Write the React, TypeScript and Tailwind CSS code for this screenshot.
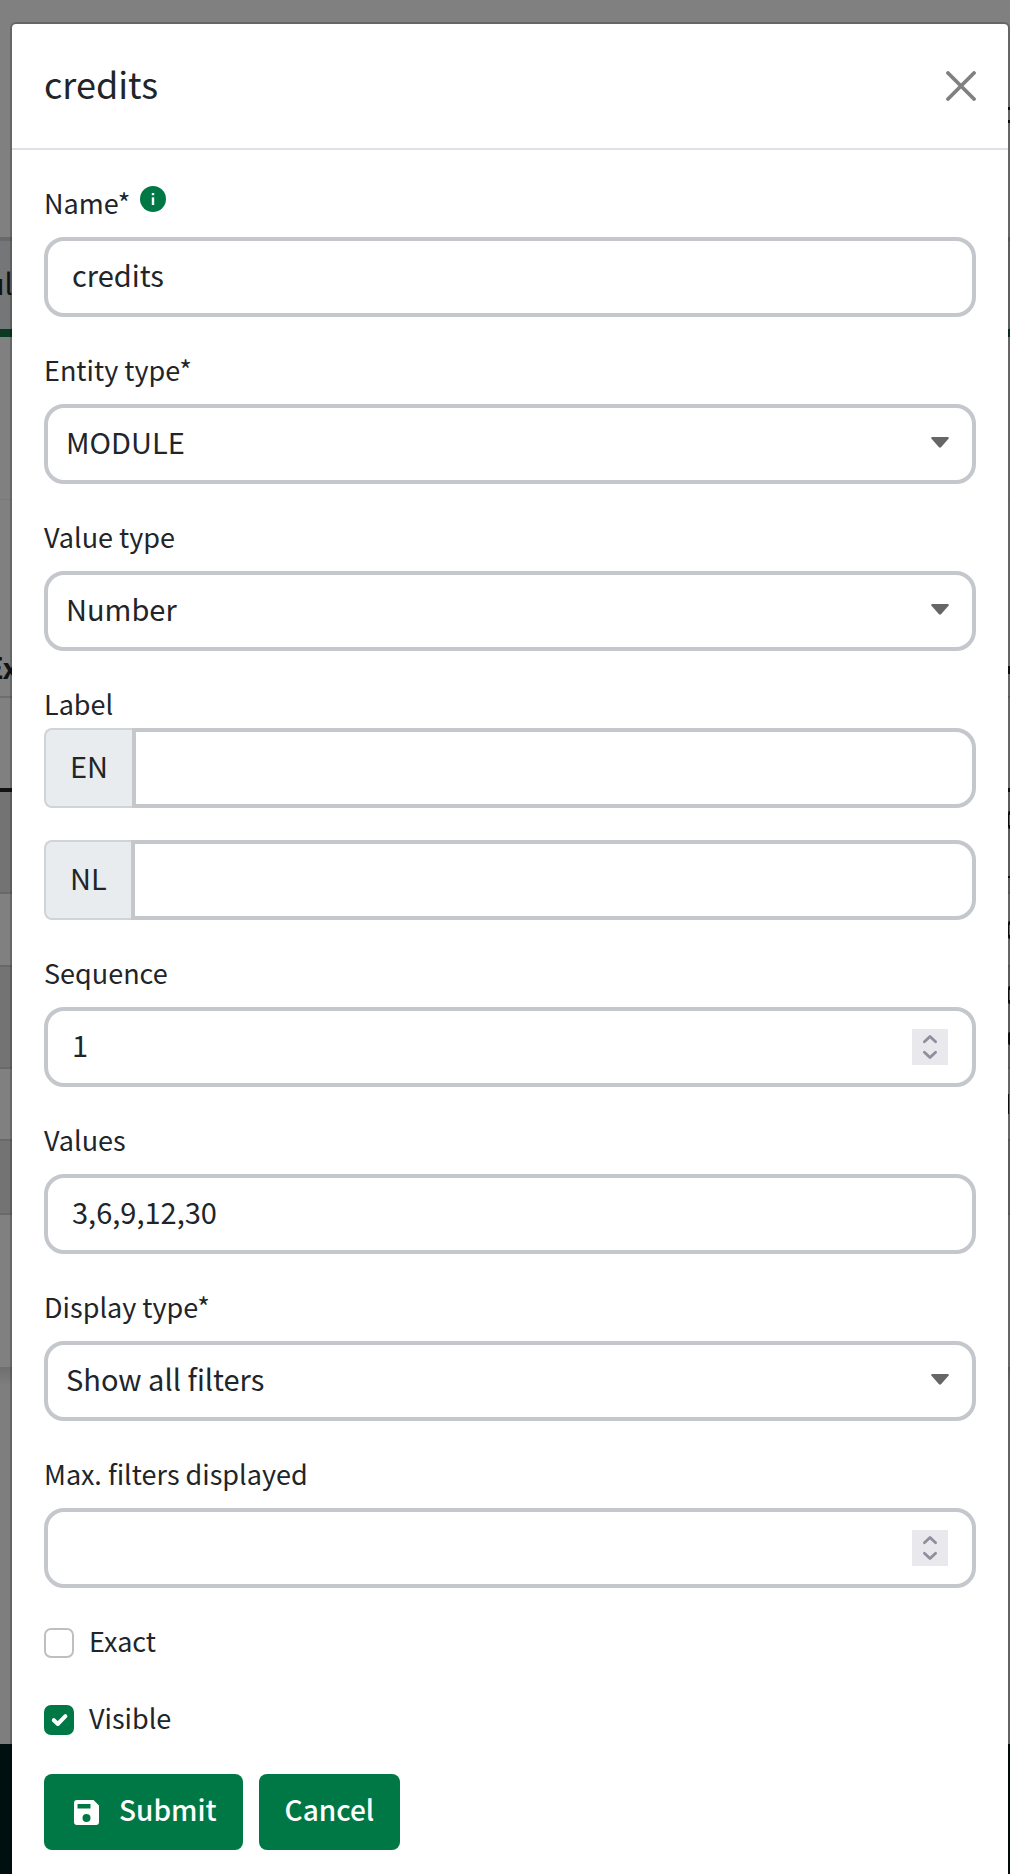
import type { ReactNode } from "react";

const fieldBox =
  "block h-20 w-full appearance-none rounded-[20px] border-4 border-[#c4c7cc] bg-white text-[29px] text-[#212529] outline-none";
const inputBox = `${fieldBox} px-6 pb-[7px]`;

type FieldProps = { id: string; label: string; hint?: ReactNode; children: ReactNode };

function Field({ id, label, hint, children }: FieldProps) {
  return (
    <div>
      <div className="mb-[14px] flex gap-[10px]">
        <label htmlFor={id} className="text-[27px] leading-[41px]">
          {label}
        </label>
        {hint}
      </div>
      {children}
    </div>
  );
}

function InfoIcon() {
  return (
    <svg viewBox="0 0 26 26" className="mt-1 size-[26px]" role="img" aria-label="Info">
      <circle cx="13" cy="13" r="13" fill="#007845" />
      <rect x="11.8" y="7" width="2.4" height="2.2" fill="#fff" />
      <rect x="11.8" y="11.3" width="2.4" height="7.7" fill="#fff" />
    </svg>
  );
}

function SelectField({ id, label, value }: { id: string; label: string; value: string }) {
  return (
    <Field id={id} label={label}>
      <div className="relative">
        <select id={id} defaultValue={value} className={`${fieldBox} pb-[5px] pl-[18px] pr-16`}>
          <option>{value}</option>
        </select>
        <svg viewBox="0 0 18 11" className="pointer-events-none absolute right-[27px] top-[33px] h-[11px] w-[18px]" aria-hidden="true">
          <path d="M1 0h16q1.400 .6 .5 1.800L10 10.300q-1 .9-2 0L.5 1.800Q-.4.600 1 0z" fill="#666" />
        </svg>
      </div>
    </Field>
  );
}

function NumberField({ id, label, value }: { id: string; label: string; value?: number }) {
  return (
    <Field id={id} label={label}>
      <div className="relative">
        <input
          id={id}
          type="number"
          defaultValue={value}
          className={`${inputBox} [appearance:textfield] [&::-webkit-inner-spin-button]:appearance-none`}
        />
        <svg viewBox="0 0 36 36" className="pointer-events-none absolute right-7 top-[22px] size-9 bg-[#e8e8ed]" aria-hidden="true">
          <path d="M12.400 12.800L18 7.400l5.600 5.400M12.400 23.200l5.600 5.400 5.600-5.400" fill="none" stroke="#8f8f9d" strokeWidth="2.8" strokeLinecap="round" strokeLinejoin="round" />
        </svg>
      </div>
    </Field>
  );
}

function LanguageInput({ code }: { code: string }) {
  const id = `label-${code.toLowerCase()}`;
  return (
    <div className="flex h-20">
      <label
        htmlFor={id}
        className="flex items-center rounded-l-lg border-2 border-r-0 border-[#ced4da] bg-[#e9ecef] px-6 pb-[5px] text-[29px]"
      >
        {code}
      </label>
      <input
        id={id}
        type="text"
        className="h-20 min-w-0 flex-1 rounded-r-[20px] border-4 border-[#c4c7cc] bg-white px-6 pb-[7px] text-[29px] outline-none"
      />
    </div>
  );
}

function CheckField({ id, label, checked }: { id: string; label: string; checked?: boolean }) {
  return (
    <div className="flex h-[45px] items-center gap-[15px]">
      <span className="relative flex size-[30px]">
        <input
          id={id}
          type="checkbox"
          defaultChecked={checked}
          className="peer size-[30px] appearance-none rounded-[7px] border-2 border-[#bfbfbf] bg-white checked:border-[#007845] checked:bg-[#007845]"
        />
        <svg viewBox="0 0 30 30" className="pointer-events-none absolute inset-0 hidden size-[30px] peer-checked:block" aria-hidden="true">
          <path d="M9.800 15.200l4 3.800 7.600-7.800" fill="none" stroke="#fff" strokeWidth="4" strokeLinecap="round" strokeLinejoin="round" />
        </svg>
      </span>
      <label htmlFor={id} className="pb-[3px] text-[27px] leading-[40px]">
        {label}
      </label>
    </div>
  );
}

function SaveIcon() {
  return (
    <svg viewBox="0 0 25 25" className="size-[25px]" aria-hidden="true">
      <path
        fillRule="evenodd"
        fill="#fff"
        d="M3 0h16.500L25 5.500V22a3 3 0 0 1-3 3H3a3 3 0 0 1-3-3V3a3 3 0 0 1 3-3zM3.500 4v4.500h13V4zM12.500 14a4 4 0 1 0 0 8 4 4 0 0 0 0-8z"
      />
    </svg>
  );
}

/* The overview page behind the dialog, already dimmed by the backdrop. */
function PageBehind() {
  return (
    <div aria-hidden="true" className="absolute inset-0 flex flex-col overflow-hidden bg-[#808080] text-[29px] leading-[40px] text-[#101214]">
      <div className="flex h-[237px] items-end justify-end">
        <div className="mb-[114px] h-4 w-2 border-y-3 border-[#101010]" />
      </div>
      <div className="h-[100px] shrink-0 overflow-hidden border-b-8 border-t-4 border-b-[#0a3a22] border-t-[#67696c] bg-[#747678] pt-[21px]">
        <span className="-ml-[13px]">ul</span>
      </div>
      <div className="h-[163px] shrink-0 border-b border-[#797979]" />
      <div className="flex h-[198px] shrink-0 items-end border-b-2 border-[#6b6f72] pb-[10px] font-bold">
        <span className="-ml-[14px]">Ex</span>
      </div>
      <div className="h-[94px] shrink-0 border-b-4 border-[#101214]" />
      <div className="h-[102px] shrink-0 border-b-2 border-[#676a6d] bg-[#737373]" />
      <div className="h-[73px] shrink-0 border-b-2 border-[#676a6d]" />
      <div className="h-[102px] shrink-0 border-b-2 border-[#676a6d] bg-[#737373]" />
      <div className="h-[72px] shrink-0 border-b-2 border-[#676a6d]" />
      <div className="h-[74px] shrink-0 border-b-2 border-[#676a6d] bg-[#737373]" />
      <div className="h-[152px] shrink-0" />
      <div className="h-[377px] shrink-0 bg-linear-to-b from-[#6f6f6f] via-[#7e7e7e] via-5% to-[#7e7e7e]" />
      <div className="flex-1 bg-[#001010]" />
      {/* Edges of the table's next column, just visible beside the dialog. */}
      <div className="absolute right-0 top-[666px] flex w-[2px] flex-col">
        <div className="h-2 bg-[#101214]" />
        <div className="mt-[137px] h-[18px] rounded-l-full border-y-4 border-l border-[#101214]" />
        <div className="mt-[47px] h-[2px] bg-[#101214]" />
        <div className="mt-[43px] h-[18px] rounded-l-full border-y-4 border-l border-[#101214]" />
        <div className="mt-[47px] h-[18px] rounded-l-full border-y-4 border-l border-[#101214]" />
        <div className="mt-[28px] h-[13px] rounded-l-full bg-[#101214]" />
        <div className="mt-[49px] h-5 w-px bg-[#101214]" />
      </div>
    </div>
  );
}

export default function App() {
  return (
    <div className="relative min-h-screen pl-[10px] pt-[22px] font-['Noto_Sans_CJK_SC','Noto_Sans',sans-serif] text-[#212529]">
      <PageBehind />
      <div
        role="dialog"
        aria-labelledby="dialog-title"
        className="relative rounded-t-md border-2 border-b-0 border-black/20 bg-white bg-clip-padding"
      >
        <header className="flex h-[126px] items-center justify-between border-b-2 border-[#dee2e6] px-8">
          <h1 id="dialog-title" className="pb-[7px] text-[36px] leading-[48px]">
            credits
          </h1>
          <button type="button" aria-label="Close">
            <svg viewBox="0 0 30 30" className="size-[30px]" aria-hidden="true">
              <path d="M2 2l26 26M28 2L2 28" stroke="#808080" strokeWidth="3.800" strokeLinecap="round" />
            </svg>
          </button>
        </header>
        <form className="flex flex-col gap-8 px-8 pb-6 pt-8" onSubmit={(e) => e.preventDefault()}>
          <Field id="name" label="Name*" hint={<InfoIcon />}>
            <input id="name" type="text" defaultValue="credits" className={inputBox} />
          </Field>
          <SelectField id="entity-type" label="Entity type*" value="MODULE" />
          <SelectField id="value-type" label="Value type" value="Number" />
          <fieldset className="flex flex-col gap-8">
            <legend className="mb-1 text-[27px] leading-[41px]">Label</legend>
            <LanguageInput code="EN" />
            <LanguageInput code="NL" />
          </fieldset>
          <NumberField id="sequence" label="Sequence" value={1} />
          <Field id="values" label="Values">
            <input id="values" type="text" defaultValue="3,6,9,12,30" className={inputBox} />
          </Field>
          <SelectField id="display-type" label="Display type*" value="Show all filters" />
          <NumberField id="max-filters" label="Max. filters displayed" />
          <CheckField id="exact" label="Exact" />
          <CheckField id="visible" label="Visible" checked />
          <div className="flex gap-4">
            <button type="submit" className="flex h-[76px] items-center gap-5 rounded-lg bg-[#007845] pl-[30px] pr-[26px] text-white">
              <SaveIcon />
              <span className="pb-[7px] text-[28px] font-medium leading-[40px]">Submit</span>
            </button>
            <button type="button" className="h-[76px] rounded-lg bg-[#007845] px-[26px] pb-[7px] text-[28px] font-medium leading-[40px] text-white">
              Cancel
            </button>
          </div>
        </form>
      </div>
    </div>
  );
}
